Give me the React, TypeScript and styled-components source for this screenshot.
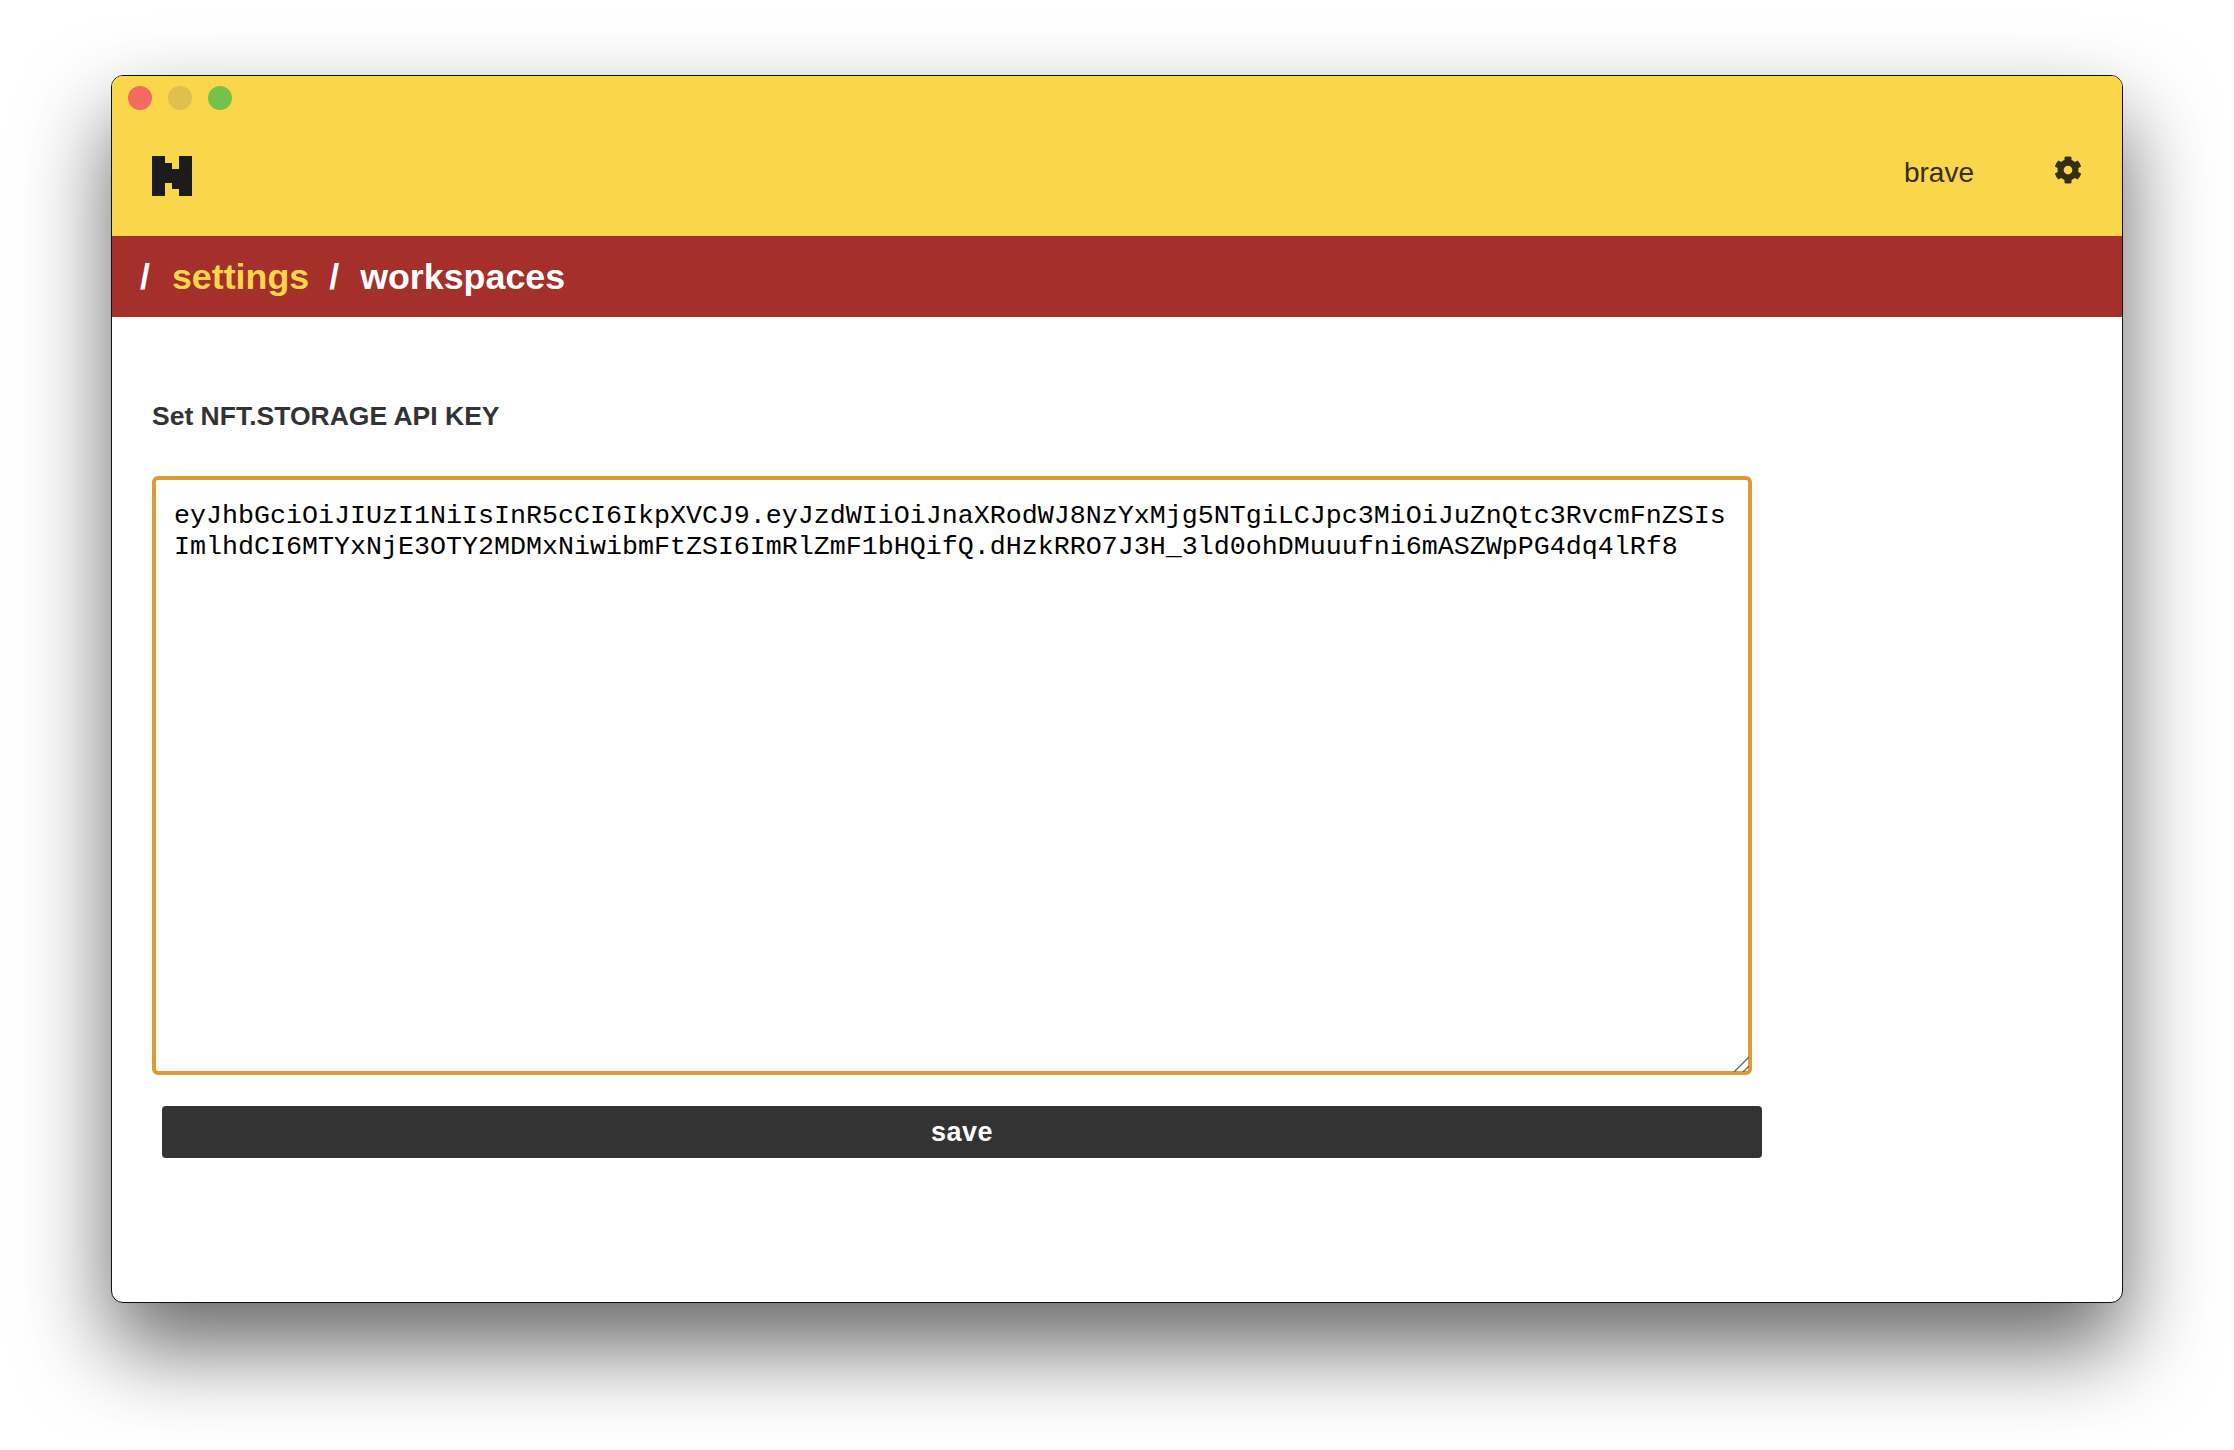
import React from 'react';
import styled, { createGlobalStyle } from 'styled-components';
import { FaCog } from 'react-icons/fa';

const API_KEY =
  'eyJhbGciOiJIUzI1NiIsInR5cCI6IkpXVCJ9.eyJzdWIiOiJnaXRodWJ8NzYxMjg5NTgiLCJpc3MiOiJuZnQtc3RvcmFnZSIsImlhdCI6MTYxNjE3OTY2MDMxNiwibmFtZSI6ImRlZmF1bHQifQ.dHzkRRO7J3H_3ld0ohDMuuufni6mASZWpPG4dq4lRf8';

const GlobalStyle = createGlobalStyle`
  html, body {
    margin: 0;
    background: #fff;
    font-family: "Liberation Sans", Arial, sans-serif;
  }
`;

const Page = styled.div`
  width: 2234px;
  height: 1450px;
  padding: 75px 111px 0;
  box-sizing: border-box;
  overflow: hidden;
`;

const Window = styled.div`
  width: 2012px;
  height: 1228px;
  box-sizing: border-box;
  border: 1px solid #111;
  border-radius: 12px;
  background: #fff;
  overflow: hidden;
  box-shadow: 0 44px 88px rgba(0, 0, 0, 0.6);
`;

const Header = styled.header`
  height: 160px;
  box-sizing: border-box;
  background: #fad64a;
  padding: 10px 40px 0 16px;
`;

const Lights = styled.div`
  display: flex;
  gap: 16px;
`;

const Light = styled.span<{ $color: string }>`
  width: 24px;
  height: 24px;
  border-radius: 50%;
  background: ${props => props.$color};
`;

const HeaderRow = styled.div`
  display: flex;
  align-items: flex-start;
  justify-content: space-between;
  margin-top: 46px;
  padding-left: 24px;
`;

const Logo = styled.svg`
  width: 40px;
  height: 40px;
  display: block;
`;

const HeaderRight = styled.div`
  display: flex;
  align-items: flex-start;
  gap: 80px;
  margin-top: -3px;
  color: #362e12;
`;

const UserName = styled.span`
  font-size: 28px;
  line-height: 40px;
`;

const SettingsIcon = styled(FaCog)`
  width: 28px;
  height: 28px;
  display: block;
  margin-top: 3px;
`;

const Breadcrumb = styled.nav`
  height: 81px;
  box-sizing: border-box;
  background: #a52f2b;
  display: flex;
  align-items: center;
  padding: 1px 0 0 28px;
  font-size: 35.8px;
  font-weight: 700;
  color: #fff;
`;

const Crumb = styled.span<{ $active?: boolean; $gap: number }>`
  margin-right: ${props => props.$gap}px;
  color: ${props => (props.$active ? '#fad64a' : '#fff')};
`;

const Content = styled.main`
  padding: 82px 0 0 40px;
`;

const Label = styled.h2`
  margin: 0;
  font-size: 26.5px;
  line-height: 34px;
  font-weight: 700;
  color: #333;
`;

const InputWrap = styled.div`
  position: relative;
  width: 1600px;
  height: 599px;
  margin-top: 43px;
`;

const KeyInput = styled.textarea`
  display: block;
  width: 100%;
  height: 100%;
  box-sizing: border-box;
  padding: 21px 18px;
  border: 4px solid #de9a35;
  border-radius: 6px;
  outline: none;
  resize: none;
  background: #fff;
  color: #000;
  font-family: "Liberation Mono", "Courier New", monospace;
  font-size: 26.67px;
  line-height: 31px;
`;

const ResizeGrip = styled.svg`
  position: absolute;
  right: 3px;
  bottom: 3px;
  width: 16px;
  height: 16px;
  display: block;
`;

const SaveButton = styled.button`
  display: block;
  width: 1600px;
  height: 52px;
  margin: 31px 0 0 10px;
  border: 0;
  border-radius: 4px;
  background: #333;
  color: #fff;
  font-family: "Liberation Sans", Arial, sans-serif;
  font-size: 27px;
  font-weight: 700;
  letter-spacing: 0.5px;
`;

export default function App() {
  return (
    <Page>
      <GlobalStyle />
      <Window>
        <Header>
          <Lights>
            <Light $color="#f26b60" />
            <Light $color="#e0bf4d" />
            <Light $color="#74c14c" />
          </Lights>
          <HeaderRow>
            <Logo viewBox="0 0 40 40">
              <path
                fill="#1c1c1c"
                d="M0 0H13V7H20V13H27V0H40V40H27V33H20V27H13V40H0Z"
              />
            </Logo>
            <HeaderRight>
              <UserName>brave</UserName>
              <SettingsIcon />
            </HeaderRight>
          </HeaderRow>
        </Header>
        <Breadcrumb>
          <Crumb $gap={22}>/</Crumb>
          <Crumb $active $gap={20}>settings</Crumb>
          <Crumb $gap={21}>/</Crumb>
          <Crumb $gap={0}>workspaces</Crumb>
        </Breadcrumb>
        <Content>
          <Label>Set NFT.STORAGE API KEY</Label>
          <InputWrap>
            <KeyInput defaultValue={API_KEY} spellCheck={false} />
            <ResizeGrip viewBox="0 0 16 16">
              <path d="M1 16L16 1M10 16L16 10" stroke="#666" strokeWidth="1.4" fill="none" />
            </ResizeGrip>
          </InputWrap>
          <SaveButton>save</SaveButton>
        </Content>
      </Window>
    </Page>
  );
}
